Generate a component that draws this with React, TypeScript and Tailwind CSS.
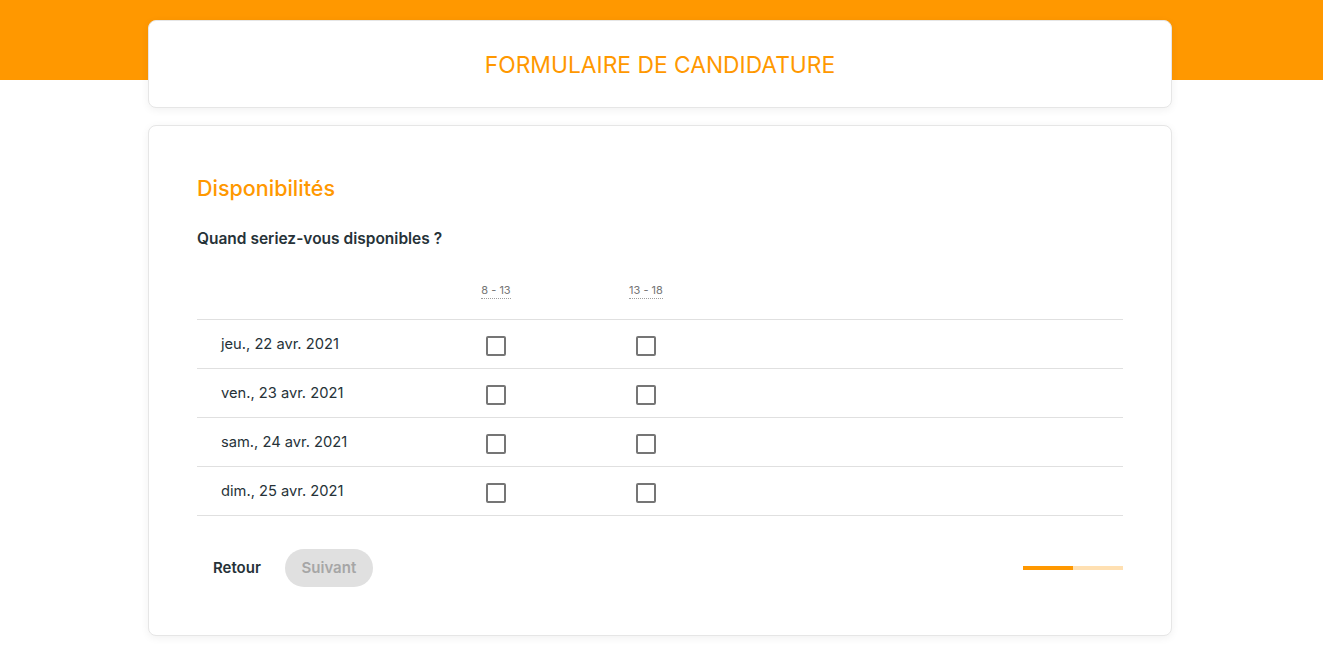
import { useState } from "react";

const days = [
  "jeu., 22 avr. 2021",
  "ven., 23 avr. 2021",
  "sam., 24 avr. 2021",
  "dim., 25 avr. 2021",
];

const slots = ["8 - 13", "13 - 18"];

function Checkbox({ checked, onChange }: { checked: boolean; onChange: () => void }) {
  return (
    <button
      type="button"
      onClick={onChange}
      className={`h-[20px] w-[20px] rounded-[2px] border-2 ${
        checked ? "border-[#ff9800] bg-[#ff9800]" : "border-[#757575] bg-white"
      }`}
    />
  );
}

export default function App() {
  const [picked, setPicked] = useState<Record<string, boolean>>({});

  const toggle = (key: string) =>
    setPicked((p) => ({ ...p, [key]: !p[key] }));

  return (
    <div
      className="relative min-h-[653px] bg-white"
      style={{ fontFamily: "Inter, 'Noto Sans', sans-serif" }}
    >
      {/* Orange band */}
      <div className="absolute inset-x-0 top-0 h-[80px] bg-[#ff9800]" />

      <div className="relative ml-[148px] w-[1024px] pt-[20px]">
        {/* Header */}
        <div className="flex h-[88px] items-center justify-center rounded-[8px] border border-[#e6e6e6] bg-white pt-[2px] shadow-[0_2px_8px_rgba(0,0,0,0.06)]">
          <h1 className="text-[22.8px] font-normal uppercase text-[#ff9800]">
            Formulaire de candidature
          </h1>
        </div>

        {/* Form card */}
        <div className="mt-[17px] rounded-[8px] border border-[#e6e6e6] bg-white px-[48px] pb-[48px] pt-[48px] shadow-[0_2px_8px_rgba(0,0,0,0.06)]">
          <h2 className="text-[21.5px] font-medium leading-[28px] text-[#ff9800]">
            Disponibilités
          </h2>
          <p className="mt-[26px] text-[15.5px] font-semibold leading-[22px] text-[#263238]">
            Quand seriez-vous disponibles ?
          </p>

          {/* Table */}
          <div className="mt-[13px]">
            <div className="grid h-[56px] grid-cols-[224px_150px_150px_1fr] items-center">
              <div />
              {slots.map((s) => (
                <div key={s} className="flex justify-center">
                  <span className="border-b border-dotted border-[#9e9e9e] text-[11px] leading-[15px] text-[#757575]">
                    {s}
                  </span>
                </div>
              ))}
              <div />
            </div>
            {days.map((d) => (
              <div
                key={d}
                className="grid h-[49px] grid-cols-[224px_150px_150px_1fr] items-center border-t border-[#e0e0e0] last:h-[50px] last:border-b"
              >
                <div className="pl-[24px] text-[14.7px] text-[#263238]">{d}</div>
                {slots.map((s) => (
                  <div key={s} className="flex justify-center pt-[4px]">
                    <Checkbox
                      checked={!!picked[d + s]}
                      onChange={() => toggle(d + s)}
                    />
                  </div>
                ))}
                <div />
              </div>
            ))}
          </div>

          {/* Footer */}
          <div className="mt-[33px] flex items-center justify-between">
            <div className="flex items-center gap-[8px]">
              <button
                type="button"
                className="h-[38px] rounded-full px-[16px] text-[15px] font-semibold text-[#263238]"
              >
                Retour
              </button>
              <button
                type="button"
                disabled
                className="h-[38px] w-[88px] rounded-full bg-[#e0e0e0] text-[15px] font-semibold text-[#a6a6a6]"
              >
                Suivant
              </button>
            </div>
            <div className="flex h-[4px] w-[100px]">
              <div className="h-full w-1/2 bg-[#ff9800]" />
              <div className="h-full w-1/2 bg-[#ffe0b2]" />
            </div>
          </div>
        </div>
      </div>
    </div>
  );
}
